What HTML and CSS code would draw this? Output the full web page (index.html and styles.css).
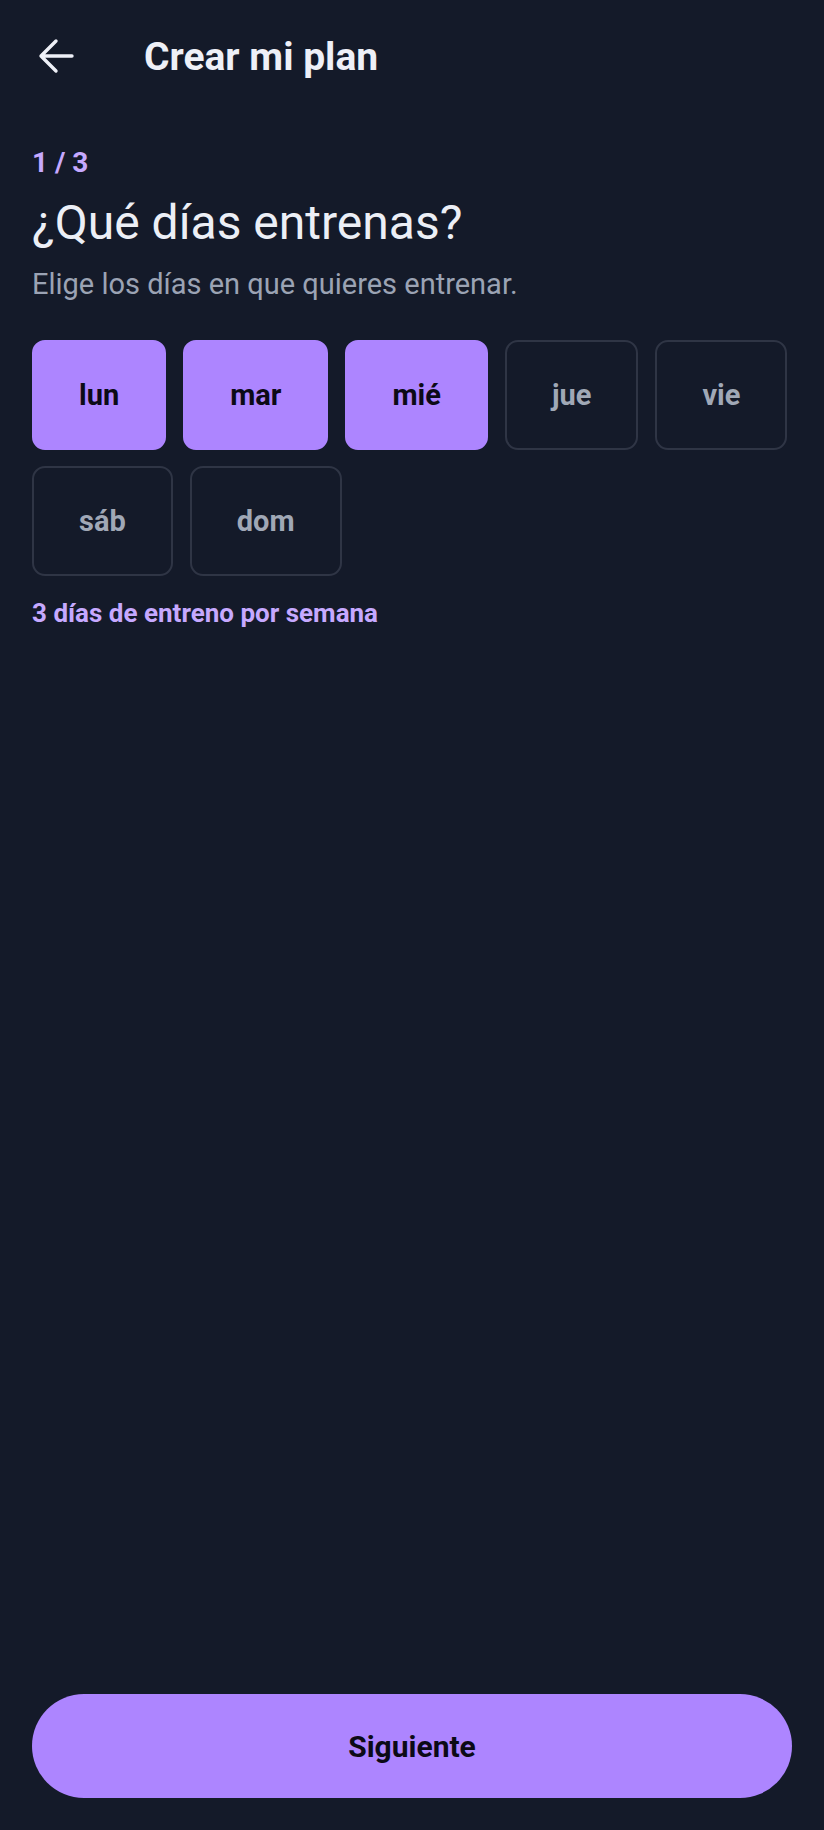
FILE: index.html
```html
<!DOCTYPE html>
<html lang="es">
<head>
<meta charset="utf-8">
<title>Crear mi plan</title>
<link rel="stylesheet" href="styles.css">
</head>
<body>
    <div class="screen">
        <header class="topbar">
            <button class="back" aria-label="Volver">
                <svg width="48" height="48" viewBox="0 0 48 48">
                    <path d="M9 24H40M24 9L9 24L24 39" fill="none" stroke="#eef0f7" stroke-width="3.4" stroke-linecap="round" stroke-linejoin="round"/>
                </svg>
            </button>
            <h1 class="title">Crear mi plan</h1>
        </header>

        <main class="content">
            <p class="step">1 / 3</p>
            <h2 class="question">¿Qué días entrenas?</h2>
            <p class="hint">Elige los días en que quieres entrenar.</p>

            <div class="days">
                <button class="day selected">lun</button>
                <button class="day selected">mar</button>
                <button class="day selected">mié</button>
                <button class="day">jue</button>
                <button class="day">vie</button>
                <button class="day">sáb</button>
                <button class="day">dom</button>
            </div>

            <p class="count">3 días de entreno por semana</p>
        </main>

        <footer class="actions">
            <button class="next">Siguiente</button>
        </footer>
    </div>
</body>
</html>
```

FILE: styles.css
```css
html, body {
    margin: 0;
    padding: 0;
    background: #141a29;
}
body {
    font-family: Roboto, "Noto Sans", sans-serif;
    color: #eceff6;
}
button {
    font-family: inherit;
    cursor: pointer;
}
.screen {
    display: flex;
    flex-direction: column;
    min-height: 1830px;
}
.topbar {
    display: flex;
    align-items: center;
    height: 112px;
    padding-left: 32px;
    gap: 64px;
}
.back {
    display: flex;
    width: 48px;
    height: 48px;
    padding: 0;
    border: none;
    background: none;
}
.title {
    margin: 0;
    font-size: 39px;
    line-height: 40px;
    font-weight: 700;
    color: #eef0f7;
    position: relative;
    top: 1px;
}
.content {
    padding: 35px 32px 0;
}
.step {
    margin: 0;
    font-size: 28px;
    line-height: 32px;
    font-weight: 700;
    color: #c6a9ff;
}
.question {
    margin: 18px 0 0;
    font-size: 48px;
    line-height: 52px;
    font-weight: 400;
    color: #eceff6;
}
.hint {
    margin: 17px 0 0;
    font-size: 29px;
    line-height: 36px;
    color: #9ba3b4;
}
.days {
    display: flex;
    flex-wrap: wrap;
    gap: 16px 17px;
    margin-top: 38px;
}
.day {
    box-sizing: border-box;
    height: 110px;
    padding: 0 45px;
    border: 2px solid #2f3545;
    border-radius: 13px;
    background: transparent;
    font-size: 29px;
    line-height: 34px;
    font-weight: 700;
    color: #a0a8b6;
}
.day.selected {
    background: #ad85ff;
    border-color: #ad85ff;
    color: #0c0a16;
}
.count {
    margin: 21px 0 0;
    font-size: 26px;
    line-height: 32px;
    font-weight: 700;
    color: #c6a9ff;
}
.actions {
    margin-top: auto;
    padding: 0 32px 32px;
}
.next {
    display: block;
    width: 100%;
    height: 104px;
    border: none;
    border-radius: 52px;
    background: #ad85ff;
    font-size: 30px;
    font-weight: 700;
    color: #0c0a16;
}
```
